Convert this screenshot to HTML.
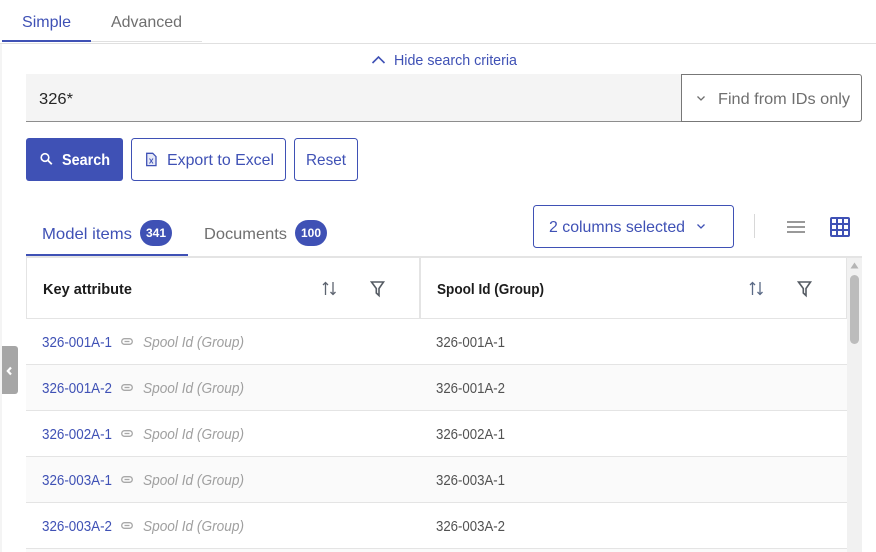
<!DOCTYPE html>
<html lang="en">
<head>
<meta charset="utf-8">
<title>Search</title>
<style>
html,body{margin:0;padding:0;background:#fff;width:876px;height:552px;overflow:hidden}
svg{display:block}
text{font-family:"Liberation Sans",sans-serif;font-size:16px}
.b{fill:#3f51b5}
.g{fill:#6f6f6f}
.l{font-size:14.5px;fill:#3f51b5}
.s{font-size:14.5px;font-style:italic;fill:#a0a0a0}
.v{font-size:14.5px;fill:#525252}
.h{font-size:15px;font-weight:bold;fill:#1c1c1c}
</style>
</head>
<body>
<svg width="876" height="552" viewBox="0 0 876 552" xmlns="http://www.w3.org/2000/svg">
<defs>
<g id="sort" fill="none" stroke-width="1.300">
<path d="M3.500 14V1.500M1 4l2.500-2.500L6 4"/><path d="M11 1v12.500M8.500 11l2.500 2.500 2.500-2.500"/>
</g>
<g id="filter" fill="none" stroke="#555b63" stroke-width="1.600">
<path d="M1 1h12L8.500 7.500V14.500L5.800 12V7.500z"/>
</g>
<g id="link" fill="none" stroke="#a8a8a8" stroke-width="1.300">
<rect x="0.700" y="0.700" width="10.600" height="5.600" rx="2.800"/><path d="M3.500 3.500h5"/>
</g>
</defs>

<rect x="0" y="44" width="2" height="508" fill="#f4f4f4"/>

<!-- top tabs -->
<text x="22" y="27" class="b" textLength="49" lengthAdjust="spacingAndGlyphs">Simple</text>
<text x="111" y="27" class="g" textLength="71" lengthAdjust="spacingAndGlyphs">Advanced</text>
<rect x="91" y="41" width="111" height="1" fill="#e0e0e0"/>
<rect x="2" y="40" width="89" height="2" fill="#3f51b5"/>
<rect x="0" y="43" width="876" height="1" fill="#e0e0e0"/>

<!-- hide -->
<path d="M372.500 63l6-6 6 6" fill="none" stroke="#3f51b5" stroke-width="1.600"/>
<text x="394" y="65" class="b" style="font-size:14.500px" textLength="123" lengthAdjust="spacingAndGlyphs">Hide search criteria</text>

<!-- search input -->
<rect x="26" y="74" width="656" height="48" fill="#f4f4f4"/>
<rect x="26" y="121" width="656" height="1" fill="#8d8d8d"/>
<text x="39" y="104" fill="#262626" textLength="34" lengthAdjust="spacingAndGlyphs">326*</text>
<path d="M681.500 74.500H859a2.500 2.500 0 0 1 2.500 2.500v42a2.500 2.500 0 0 1-2.500 2.500H681.500z" fill="#fff" stroke="#777" stroke-width="1"/>
<path d="M697.500 96.500l3.500 3.500 3.500-3.500" fill="none" stroke="#6f6f6f" stroke-width="1.300"/>
<text x="718" y="104" class="g" textLength="132" lengthAdjust="spacingAndGlyphs">Find from IDs only</text>

<!-- buttons -->
<rect x="26" y="138" width="97" height="43" rx="3" fill="#3f51b5"/>
<circle cx="45" cy="157.500" r="3.800" fill="none" stroke="#fff" stroke-width="1.600"/>
<path d="M47.800 160.300l4 4" stroke="#fff" stroke-width="1.800"/>
<text x="62" y="165" fill="#fff" font-weight="bold" textLength="48" lengthAdjust="spacingAndGlyphs">Search</text>

<rect x="131.500" y="138.500" width="154" height="42" rx="3" fill="#fff" stroke="#3f51b5"/>
<path d="M146.700 153.300h6l3.300 3.300v9h-9.300z" fill="#e6e9f7" stroke="#3f51b5" stroke-width="1.300"/>
<path d="M149.500 158.500l3.500 5M153 158.500l-3.500 5" stroke="#3f51b5" stroke-width="1"/>
<text x="167" y="165" class="b" textLength="107" lengthAdjust="spacingAndGlyphs">Export to Excel</text>

<rect x="294.500" y="138.500" width="63" height="42" rx="3" fill="#fff" stroke="#3f51b5"/>
<text x="306" y="165" class="b" textLength="40" lengthAdjust="spacingAndGlyphs">Reset</text>

<!-- result tabs -->
<text x="42" y="239" class="b" textLength="90" lengthAdjust="spacingAndGlyphs">Model items</text>
<rect x="140" y="220" width="32" height="26" rx="13" fill="#3f51b5"/>
<text x="156" y="237" fill="#fff" font-weight="bold" text-anchor="middle" style="font-size:12px">341</text>
<text x="204" y="239" class="g" textLength="83" lengthAdjust="spacingAndGlyphs">Documents</text>
<rect x="295" y="220" width="32" height="26" rx="13" fill="#3f51b5"/>
<text x="311" y="237" fill="#fff" font-weight="bold" text-anchor="middle" style="font-size:12px">100</text>
<rect x="26" y="254" width="162" height="2" fill="#3f51b5"/>

<!-- columns -->
<rect x="533.500" y="205.500" width="200" height="42" rx="3" fill="#fff" stroke="#3f51b5"/>
<text x="549" y="232" class="b" textLength="136" lengthAdjust="spacingAndGlyphs">2 columns selected</text>
<path d="M697.500 224.500l3.500 3.500 3.500-3.500" fill="none" stroke="#3f51b5" stroke-width="1.300"/>
<rect x="754" y="214" width="1" height="24" fill="#d8d8d8"/>
<rect x="787" y="221" width="18" height="2" fill="#999"/>
<rect x="787" y="226" width="18" height="2" fill="#999"/>
<rect x="787" y="231" width="18" height="2" fill="#999"/>
<rect x="831" y="218" width="18" height="18" rx="1" fill="none" stroke="#3f51b5" stroke-width="2"/>
<path d="M837 218v18M843 218v18M831 224h18M831 230h18" fill="none" stroke="#3f51b5" stroke-width="2"/>

<!-- scrollbar -->
<rect x="847" y="258" width="15" height="294" fill="#f1f1f1"/>
<path d="M850.500 268.500l4-6 4 6z" fill="#b5b5b5"/>
<rect x="850" y="275" width="9" height="69" rx="4.500" fill="#bcbcbc"/>

<!-- table -->
<rect x="26" y="256" width="836" height="2" fill="#e4e4e4"/>
<rect x="26" y="258" width="1" height="61" fill="#e4e4e4"/>
<rect x="846" y="258" width="1" height="61" fill="#e4e4e4"/>
<rect x="419" y="258" width="2" height="60" fill="#e4e4e4"/>
<rect x="26" y="318" width="821" height="1" fill="#e4e4e4"/>

<rect x="26" y="365" width="821" height="45" fill="#fafafa"/>
<rect x="26" y="457" width="821" height="45" fill="#fafafa"/>
<rect x="26" y="549" width="821" height="3" fill="#fafafa"/>
<rect x="26" y="364" width="821" height="1" fill="#e4e4e4"/>
<rect x="26" y="410" width="821" height="1" fill="#e4e4e4"/>
<rect x="26" y="456" width="821" height="1" fill="#e4e4e4"/>
<rect x="26" y="502" width="821" height="1" fill="#e4e4e4"/>
<rect x="26" y="548" width="821" height="1" fill="#e4e4e4"/>

<text x="43" y="294" class="h" textLength="89" lengthAdjust="spacingAndGlyphs">Key attribute</text>
<text x="437" y="294" class="h" textLength="107" lengthAdjust="spacingAndGlyphs">Spool Id (Group)</text>
<use href="#sort" x="322" y="281" stroke="#5d6470"/>
<use href="#filter" x="370.500" y="281"/>
<use href="#sort" x="749" y="281" stroke="#5a6a86"/>
<use href="#filter" x="797.500" y="281"/>

<!-- rows -->
<text x="42" y="347" class="l" textLength="70" lengthAdjust="spacingAndGlyphs">326-001A-1</text>
<use href="#link" x="121" y="338"/>
<text x="143" y="347" class="s" textLength="101" lengthAdjust="spacingAndGlyphs">Spool Id (Group)</text>
<text x="436" y="347" class="v" textLength="69" lengthAdjust="spacingAndGlyphs">326-001A-1</text>

<text x="42" y="393" class="l" textLength="70" lengthAdjust="spacingAndGlyphs">326-001A-2</text>
<use href="#link" x="121" y="384"/>
<text x="143" y="393" class="s" textLength="101" lengthAdjust="spacingAndGlyphs">Spool Id (Group)</text>
<text x="436" y="393" class="v" textLength="69" lengthAdjust="spacingAndGlyphs">326-001A-2</text>

<text x="42" y="439" class="l" textLength="70" lengthAdjust="spacingAndGlyphs">326-002A-1</text>
<use href="#link" x="121" y="430"/>
<text x="143" y="439" class="s" textLength="101" lengthAdjust="spacingAndGlyphs">Spool Id (Group)</text>
<text x="436" y="439" class="v" textLength="69" lengthAdjust="spacingAndGlyphs">326-002A-1</text>

<text x="42" y="485" class="l" textLength="70" lengthAdjust="spacingAndGlyphs">326-003A-1</text>
<use href="#link" x="121" y="476"/>
<text x="143" y="485" class="s" textLength="101" lengthAdjust="spacingAndGlyphs">Spool Id (Group)</text>
<text x="436" y="485" class="v" textLength="69" lengthAdjust="spacingAndGlyphs">326-003A-1</text>

<text x="42" y="531" class="l" textLength="70" lengthAdjust="spacingAndGlyphs">326-003A-2</text>
<use href="#link" x="121" y="522"/>
<text x="143" y="531" class="s" textLength="101" lengthAdjust="spacingAndGlyphs">Spool Id (Group)</text>
<text x="436" y="531" class="v" textLength="69" lengthAdjust="spacingAndGlyphs">326-003A-2</text>

<!-- side handle -->
<path d="M2 346h13a3 3 0 0 1 3 3v42a3 3 0 0 1-3 3H2z" fill="#a6a6a6"/>
<path d="M11 367.500l-3.200 3.500 3.200 3.500" fill="none" stroke="#fff" stroke-width="2.200"/>
</svg>
</body>
</html>
